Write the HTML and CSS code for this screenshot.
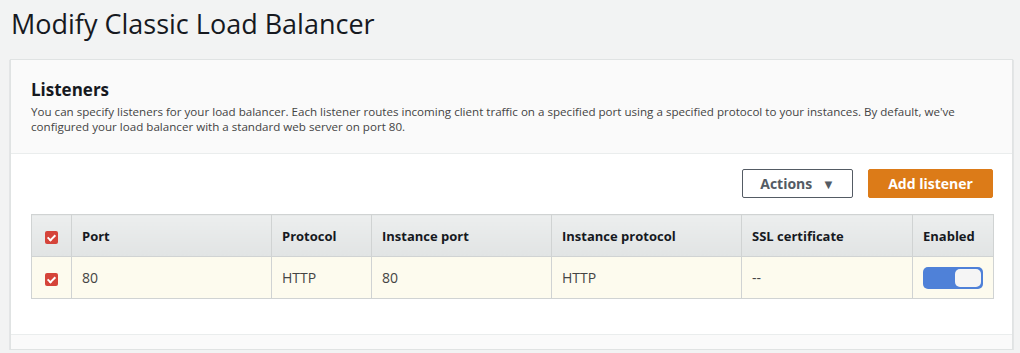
FILE: index.html
```html
<!DOCTYPE html>
<html lang="en">
<head>
  <meta charset="UTF-8">
  <meta name="viewport" content="width=device-width, initial-scale=1.0"/>
  <title>Modify Classic Load Balancer</title>
  <link rel="stylesheet" href="styles.css">
</head>
<body>
  <h1>Modify Classic Load Balancer</h1>

  <div class="card">
    <div class="card-header">
      <h2>Listeners</h2>
      <p>You can specify listeners for your load balancer. Each listener routes incoming client traffic on a specified port using a specified protocol to your instances. By default, we've configured your load balancer with a standard web server on port 80.</p>
    </div>

    <div class="card-body">
      <div class="button-row">
        <button class="btn-normal">Actions <span class="caret">&#9660;</span></button>
        <button class="btn-primary">Add listener</button>
      </div>

      <table class="listeners">
        <thead>
          <tr>
            <th class="col-check"><span class="checkbox"></span></th>
            <th class="col-port">Port</th>
            <th class="col-proto">Protocol</th>
            <th class="col-iport">Instance port</th>
            <th class="col-iproto">Instance protocol</th>
            <th class="col-ssl">SSL certificate</th>
            <th class="col-enabled">Enabled</th>
          </tr>
        </thead>
        <tbody>
          <tr class="selected">
            <td class="col-check"><span class="checkbox"></span></td>
            <td>80</td>
            <td>HTTP</td>
            <td>80</td>
            <td>HTTP</td>
            <td>--</td>
            <td><span class="toggle"><span class="knob"></span></span></td>
          </tr>
        </tbody>
      </table>
    </div>

    <div class="card-footer"></div>
  </div>
</body>
</html>
```

FILE: styles.css
```css
:root {
  --page-bg: #f2f3f3;
  --text-dark: #16191f;
  --text-gray: #444;
  --orange: #dc7b18;
  --red: #d5443a;
  --blue: #4f81d8;
}

* {
  box-sizing: border-box;
}

body {
  margin: 0;
  padding: 7px 7px 0 10px;
  font-family: "Open Sans", "Liberation Sans", sans-serif;
  background-color: var(--page-bg);
  color: var(--text-dark);
}

h1 {
  margin: 0 0 18px 1px;
  font-size: 27px;
  line-height: 34px;
  font-weight: 400;
}

.card {
  background: #fff;
  border: 1px solid #e0e3e3;
  box-shadow: 0 1px 1px rgba(0, 28, 36, 0.35);
}

.card-header {
  background: #fafafa;
  border-bottom: 1px solid #eaeded;
  padding: 18px 20px 19px;
}

.card-header h2 {
  margin: 0;
  font-size: 17px;
  line-height: 24px;
  font-weight: 700;
}

.card-header p {
  margin: 2px 0 0;
  font-size: 11.6px;
  line-height: 15px;
  color: var(--text-gray);
}

.card-body {
  padding: 15px 19px 35px 20px;
}

.button-row {
  display: flex;
  justify-content: flex-end;
  gap: 15px;
  margin-bottom: 16px;
}

button {
  height: 29px;
  font-family: inherit;
  font-size: 14px;
  font-weight: 700;
  border-radius: 2px;
  cursor: pointer;
}

.btn-normal {
  width: 111px;
  background: #fff;
  color: #545b64;
  border: 1px solid #545b64;
}

.caret {
  font-size: 13px;
  margin-left: 6px;
}

.btn-primary {
  width: 125px;
  background: var(--orange);
  color: #fff;
  border: 1px solid var(--orange);
}

.listeners {
  width: 100%;
  border-collapse: collapse;
  table-layout: fixed;
  font-size: 14px;
}

.listeners th,
.listeners td {
  border: 1px solid #d0d3d3;
  height: 42px;
  padding: 0 10px;
  text-align: left;
}

.listeners th {
  background: linear-gradient(#eceeee, #e1e4e4);
  color: var(--text-dark);
  font-size: 13px;
  font-weight: 700;
}

.listeners td {
  color: var(--text-gray);
}

.listeners tr.selected td {
  background: #fdfbee;
}

.listeners .col-check {
  width: 40px;
  padding: 0;
  text-align: center;
}

.col-port { width: 200px; }
.col-proto { width: 100px; }
.col-iport { width: 180px; }
.col-iproto { width: 190px; }
.col-ssl { width: 171px; }
.col-enabled { width: 81px; }

.checkbox {
  display: inline-block;
  position: relative;
  width: 13px;
  height: 13px;
  border-radius: 2px;
  background: var(--red);
  vertical-align: middle;
}

.checkbox::after {
  content: "";
  position: absolute;
  left: 4px;
  top: 2px;
  width: 3px;
  height: 6px;
  border: solid #fff;
  border-width: 0 2px 2px 0;
  transform: rotate(45deg);
}

.toggle {
  display: flex;
  justify-content: flex-end;
  width: 60px;
  height: 22px;
  padding: 2px;
  border-radius: 5px;
  background: var(--blue);
}

.knob {
  width: 26px;
  height: 18px;
  border-radius: 5px;
  background: #f5f5f5;
}

.card-footer {
  height: 15px;
  background: #fafafa;
  border-top: 1px solid #eaeded;
}
```
